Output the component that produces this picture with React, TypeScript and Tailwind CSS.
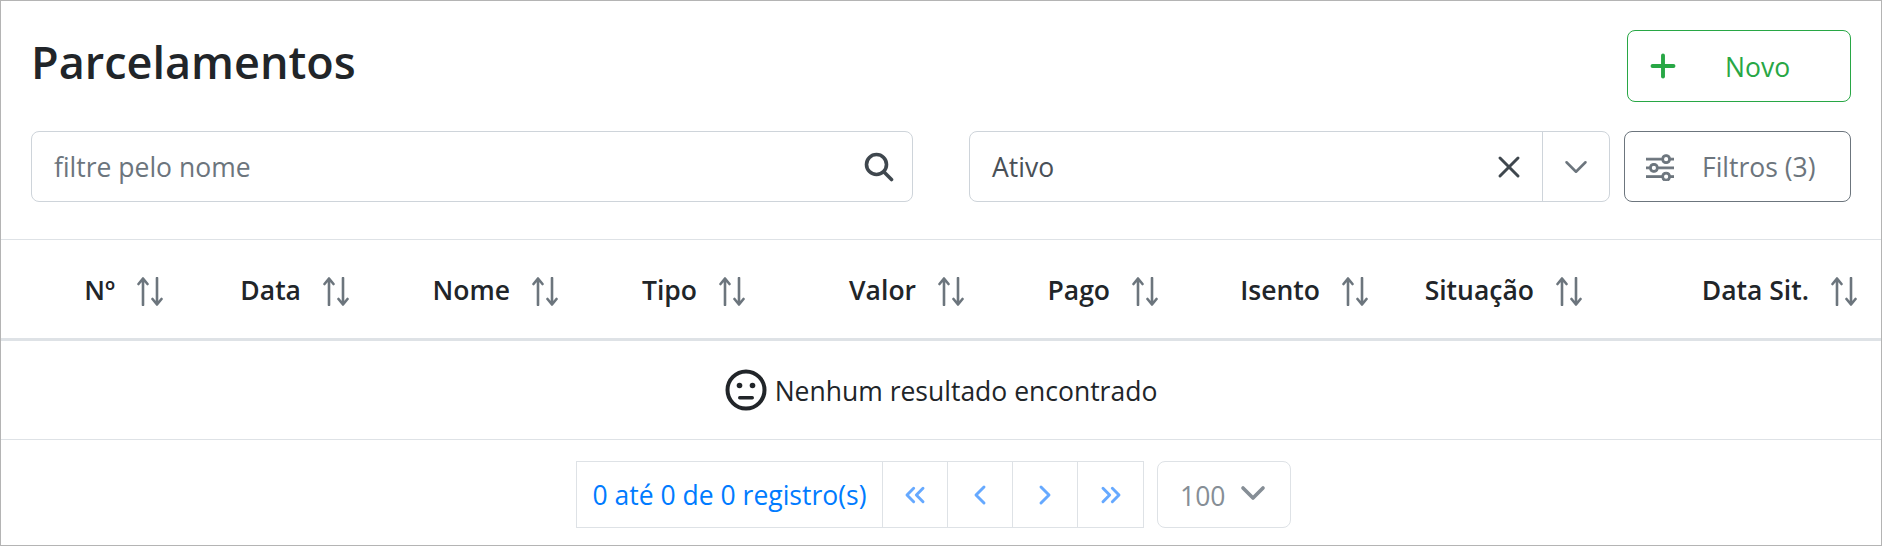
import React from 'react';
import { ChevronDown, ChevronLeft, ChevronRight, ChevronsLeft, ChevronsRight, Plus, X } from 'lucide-react';
import { BsSliders } from 'react-icons/bs';

const columns = [
  { label: 'Nº', width: 'w-[162px]' },
  { label: 'Data', width: 'w-[186px]' },
  { label: 'Nome', width: 'w-[209px]' },
  { label: 'Tipo', width: 'w-[187px]' },
  { label: 'Valor', width: 'w-[219px]' },
  { label: 'Pago', width: 'w-[194px]' },
  { label: 'Isento', width: 'w-[210px]' },
  { label: 'Situação', width: 'w-[214px]' },
  { label: 'Data Sit.', width: 'w-[275px]' },
];

const SortIcon = () => (
  <svg width="26" height="29" viewBox="0 0 26 29" fill="none" stroke="#6c757d" strokeWidth="2.6" strokeLinecap="round" strokeLinejoin="round" className="ml-[22px] shrink-0">
    <path d="M6 28V2M1.5 7L6 1.5L10.500 7" />
    <path d="M20 1V27M15.500 22L20 27.500L24.500 22" />
  </svg>
);

const SearchIcon = () => (
  <svg width="30" height="30" viewBox="0 0 30 30" fill="none" stroke="#3f474e" strokeWidth="3.6" strokeLinecap="round">
    <circle cx="12.500" cy="12.500" r="10" />
    <path d="M20 20L27.500 27.500" />
  </svg>
);

const NeutralFace = () => (
  <svg width="42" height="42" viewBox="0 0 42 42" className="shrink-0">
    <circle cx="21" cy="21" r="18.500" fill="none" stroke="#212529" strokeWidth="4" />
    <circle cx="14.500" cy="16.500" r="2.800" fill="#212529" />
    <circle cx="27.500" cy="16.500" r="2.800" fill="#212529" />
    <rect x="13" y="27" width="16" height="3.500" rx="1.700" fill="#212529" />
  </svg>
);

const PagerButton = ({ children }: { children: React.ReactNode }) => (
  <button className="flex h-full w-[65px] items-center justify-center border-r border-[#dee2e6] text-[#66a9ff]">
    {children}
  </button>
);

export default function App() {
  return (
    <div className="flex h-[546px] w-[1882px] flex-col border border-[#b4b4b4] bg-white font-['Open_Sans',sans-serif] text-[26.5px] text-[#212529]">
      <div className="px-[30px] pt-[29px] pb-[37px]">
        <div className="flex h-[72px] items-start justify-between">
          <h1 className="mt-[5px] text-[45px] leading-[54px] font-semibold">Parcelamentos</h1>
          <button className="flex h-[72px] w-[224px] items-center rounded-lg border border-[#28a745] pl-[17px] text-[#28a745]">
            <Plus size={36} strokeWidth={2.6} />
            <span className="mt-[3px] ml-[44px]">Novo</span>
          </button>
        </div>

        <div className="mt-[29px] flex h-[71px] items-stretch">
          <div className="flex w-[882px] items-center justify-between rounded-lg border border-[#ced4da] pr-[18px] pl-[22px]">
            <span className="mt-[3px] text-[#6c757d]">filtre pelo nome</span>
            <SearchIcon />
          </div>

          <div className="ml-[56px] flex w-[641px] items-center rounded-lg border border-[#ced4da]">
            <span className="mt-[3px] ml-[22px] flex-1 text-[#495057]">Ativo</span>
            <X size={36} strokeWidth={2} className="mt-[1px] mr-[15px] text-[#3f474e]" />
            <div className="flex h-full w-[67px] items-center justify-center border-l border-[#ced4da]">
              <ChevronDown size={38} strokeWidth={1.6} className="text-[#6c757d]" />
            </div>
          </div>

          <button className="ml-[14px] flex w-[227px] items-center rounded-lg border border-[#6c757d] pl-[21px] text-[#6c757d]">
            <BsSliders size={28} stroke="currentColor" strokeWidth={0.6} />
            <span className="mt-[3px] ml-[28px]">Filtros (3)</span>
          </button>
        </div>
      </div>

      <div className="flex h-[99px] items-center border-t border-[#dee2e6] pt-[4px]">
        {columns.map((col) => (
          <div key={col.label} className={`flex items-center justify-end font-semibold ${col.width}`}>
            <span>{col.label}</span>
            <SortIcon />
          </div>
        ))}
      </div>

      <div className="flex h-[102px] items-center justify-center gap-[8px] border-t-[3px] border-b border-t-[#dee2e6] border-b-[#dee2e6]">
        <NeutralFace />
        <span className="mt-[3px]">Nenhum resultado encontrado</span>
      </div>

      <div className="flex flex-1 items-start justify-center pt-[21px] pr-[15px]">
        <div className="flex h-[67px] items-center border border-[#dee2e6]">
          <span className="flex h-full w-[306px] items-center justify-center border-r border-[#dee2e6] pt-[3px] text-[#007bff]">0 até 0 de 0 registro(s)</span>
          <PagerButton><ChevronsLeft size={32} strokeWidth={2.2} /></PagerButton>
          <PagerButton><ChevronLeft size={32} strokeWidth={2.2} /></PagerButton>
          <PagerButton><ChevronRight size={32} strokeWidth={2.2} /></PagerButton>
          <button className="flex h-full w-[65px] items-center justify-center text-[#66a9ff]">
            <ChevronsRight size={32} strokeWidth={2.2} />
          </button>
        </div>
        <div className="ml-[13px] flex h-[67px] w-[134px] items-center rounded-lg border border-[#dee2e6] pl-[22px] text-[#868e96]">
          <span className="mt-[4px]">100</span>
          <ChevronDown size={40} strokeWidth={2.2} className="mb-[3px] ml-[8px]" />
        </div>
      </div>
    </div>
  );
}
